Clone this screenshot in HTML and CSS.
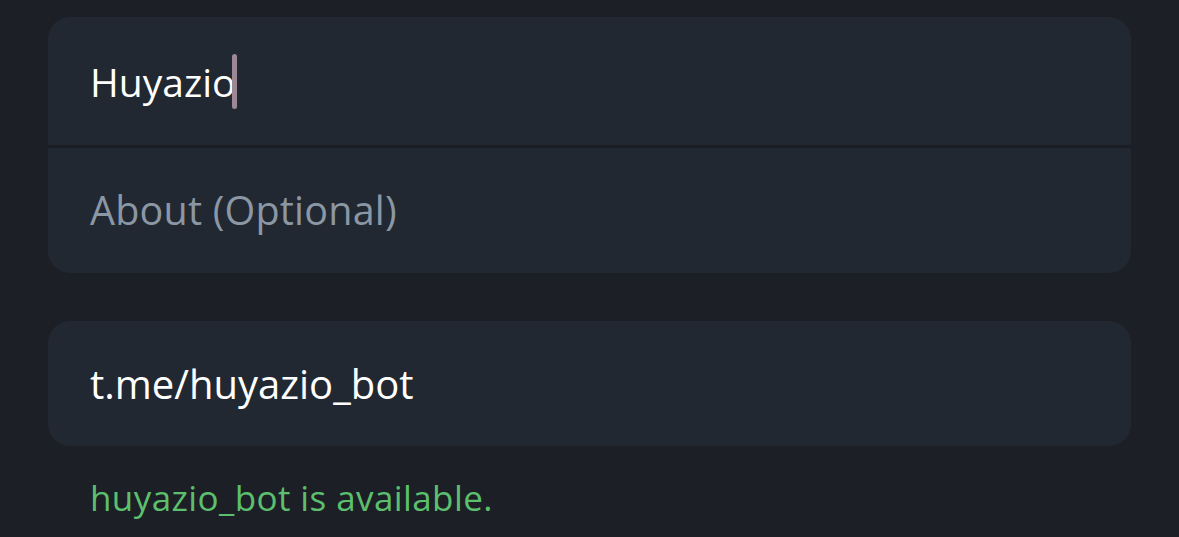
FILE: index.html
```html
<!DOCTYPE html>
<html>
<head>
<meta charset="utf-8">
<link rel="stylesheet" href="styles.css">
</head>
<body>
<div class="page">
  <div class="card">
    <div class="row"><span class="value">Huyazio</span><span class="cursor"></span></div>
    <div class="divider"></div>
    <div class="row"><span class="placeholder">About (Optional)</span></div>
  </div>
  <div class="card link">
    <div class="row"><span class="value">t.me/huyazio_bot</span></div>
  </div>
  <div class="status">huyazio_bot is available.</div>
</div>
</body>
</html>
```

FILE: styles.css
```css
html, body {
  margin: 0;
  padding: 0;
  background: #1c1f25;
  height: 100%;
}
.page {
  padding: 17px 48px 0 48px;
  font-family: "Open Sans", "Noto Sans", sans-serif;
  display: flex;
  flex-direction: column;
}
.card {
  background: #222831;
  border-radius: 22px;
  display: flex;
  flex-direction: column;
  overflow: hidden;
}
.row {
  height: 128px;
  display: flex;
  align-items: center;
  padding-left: 42px;
}
.card .row + .divider + .row {
  height: 125px;
}
.divider {
  height: 3px;
  background: #1b1f25;
}
.value {
  color: #ffffff;
  font-size: 39px;
  line-height: 1;
}
.link .value {
  font-size: 40px;
}
.placeholder {
  color: #8b97a4;
  font-size: 39.5px;
  letter-spacing: 0.2px;
  line-height: 1;
}
.cursor {
  display: inline-block;
  width: 5px;
  height: 55px;
  border-radius: 3px;
  background: #9c8894;
  margin-left: -3px;
}
.link {
  margin-top: 48px;
}
.link .row {
  height: 125px;
}
.status {
  color: #5cbf6e;
  font-size: 35px;
  letter-spacing: 0.4px;
  padding-left: 42px;
  margin-top: 28px;
}
```
